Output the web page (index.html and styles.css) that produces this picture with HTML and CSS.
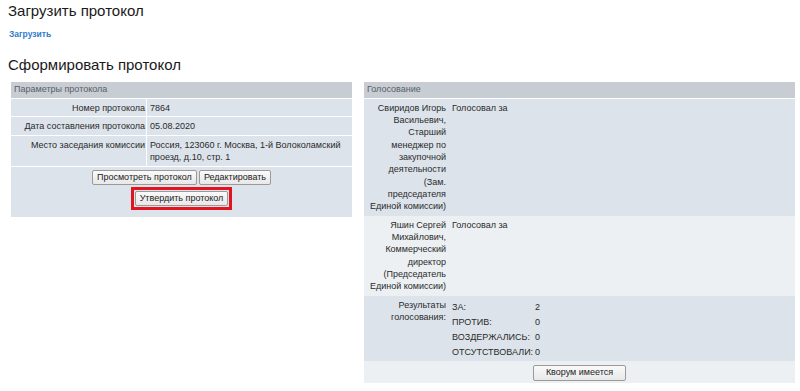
FILE: index.html
```html
<!DOCTYPE html>
<html lang="ru">
<head>
<meta charset="utf-8">
<link rel="stylesheet" href="styles.css">
</head>
<body>
<h1 class="title title-first">Загрузить протокол</h1>
<div class="upload"><a href="#" class="upload-link">Загрузить</a></div>
<h1 class="title title-second">Сформировать протокол</h1>
<div class="layout">
  <table class="grid grid-params">
    <thead>
      <tr><th colspan="2" class="grid-head">Параметры протокола</th></tr>
    </thead>
    <tbody>
      <tr><td class="lbl">Номер протокола</td><td class="val">7864</td></tr>
      <tr><td class="lbl">Дата составления протокола</td><td class="val">05.08.2020</td></tr>
      <tr><td class="lbl">Место заседания комиссии</td><td class="val">Россия, 123060 г. Москва, 1-й Волоколамский проезд, д.10, стр. 1</td></tr>
      <tr>
        <td colspan="2" class="actions">
          <div class="btn-line">
            <button class="btn">Просмотреть протокол</button>
            <button class="btn">Редактировать</button>
          </div>
          <div class="btn-line">
            <span class="highlight"><button class="btn">Утвердить протокол</button></span>
          </div>
        </td>
      </tr>
    </tbody>
  </table>
  <table class="grid grid-votes">
    <thead>
      <tr><th colspan="2" class="grid-head">Голосование</th></tr>
    </thead>
    <tbody>
      <tr class="row-dark"><td class="lbl lbl-narrow">Свиридов Игорь Васильевич, Старший менеджер по закупочной деятельности (Зам. председателя Единой комиссии)</td><td class="val">Голосовал за</td></tr>
      <tr class="row-light"><td class="lbl lbl-narrow">Яшин Сергей Михайлович, Коммерческий директор (Председатель Единой комиссии)</td><td class="val">Голосовал за</td></tr>
      <tr class="row-dark">
        <td class="lbl lbl-narrow">Результаты голосования:</td>
        <td class="val val-results">
          <table class="results">
            <tr><td class="res-name">ЗА:</td><td>2</td></tr>
            <tr><td class="res-name">ПРОТИВ:</td><td>0</td></tr>
            <tr><td class="res-name">ВОЗДЕРЖАЛИСЬ:</td><td>0</td></tr>
            <tr><td class="res-name">ОТСУТСТВОВАЛИ:</td><td>0</td></tr>
          </table>
        </td>
      </tr>
      <tr class="row-light"><td colspan="2" class="actions actions-quorum"><button class="btn btn-wide">Кворум имеется</button></td></tr>
    </tbody>
  </table>
</div>
</body>
</html>
```
FILE: styles.css
```css
html, body {
  margin: 0;
  padding: 0;
  background: #ffffff;
}
body {
  font-family: "Liberation Sans", Arial, sans-serif;
  color: #222;
  font-size: 9px;
}
.title {
  margin: 0;
  padding-left: 8px;
  font-weight: normal;
  font-size: 15px;
  line-height: 18px;
  color: #1a1a1a;
}
.title-first {
  padding-top: 2px;
}
.upload {
  margin-top: 9px;
  padding-left: 9px;
  line-height: 10px;
}
.upload-link {
  font-size: 8.5px;
  font-weight: bold;
  color: #2f7dc9;
  text-decoration: none;
}
.title-second {
  margin-top: 17px;
}
.layout {
  display: flex;
  align-items: flex-start;
  gap: 10px;
  margin-top: 7px;
  padding-left: 10px;
}
.grid {
  border-collapse: separate;
  border-spacing: 1px;
  font-size: 9px;
  line-height: 12.5px;
  color: #2a2a2a;
}
.grid-params {
  width: 343px;
}
.grid-votes {
  width: 433px;
  border-spacing: 0;
  padding: 1px;
  line-height: 12.35px;
}
.grid-head {
  background: #c8cdd3;
  color: #596068;
  font-weight: normal;
  text-align: left;
  padding: 1px 3px 2px;
  height: 12px;
  line-height: 12.5px;
}
.grid-votes .grid-head {
  border-bottom: 1px solid #fff;
}
.grid td {
  background: #dde3ea;
  vertical-align: top;
}
.lbl {
  text-align: right;
  padding: 3px 1px 2px 3px;
  width: 131px;
}
.val {
  padding: 3px 3px 2px 3px;
}
.grid-votes .lbl,
.grid-votes .val {
  padding-top: 3px;
  padding-bottom: 3px;
}
.lbl-narrow {
  width: 79px;
  padding-right: 3px;
}
.grid-votes .val-results {
  padding-top: 5px;
  padding-bottom: 0;
}
.grid-votes .row-light td {
  background: #ecf0f3;
}
.actions {
  text-align: center;
  padding: 3px 0 7px;
}
.btn-line {
  display: flex;
  justify-content: center;
  gap: 2px;
}
.btn-line + .btn-line {
  margin-top: 2px;
}
.btn {
  font-family: "Liberation Sans", Arial, sans-serif;
  font-size: 9px;
  line-height: 11px;
  color: #222;
  background: linear-gradient(#fafafa, #e8e8e8);
  border: 1px solid #9a9a9a;
  border-radius: 2px;
  padding: 1px 4px;
  margin: 0;
}
.highlight {
  display: inline-block;
  border: 3px solid #e3131f;
  padding: 1px;
}
.btn-wide {
  width: 93px;
  padding: 1px 4px 2px;
}
.grid-votes .actions-quorum {
  padding: 4px 0 2px;
}
.results {
  border-collapse: collapse;
  margin: 0;
}
.grid .results td {
  background: transparent;
  padding: 0 0 2.5px;
  line-height: 12.5px;
}
.grid .results td.res-name {
  padding-right: 2px;
  width: 78px;
}
```
